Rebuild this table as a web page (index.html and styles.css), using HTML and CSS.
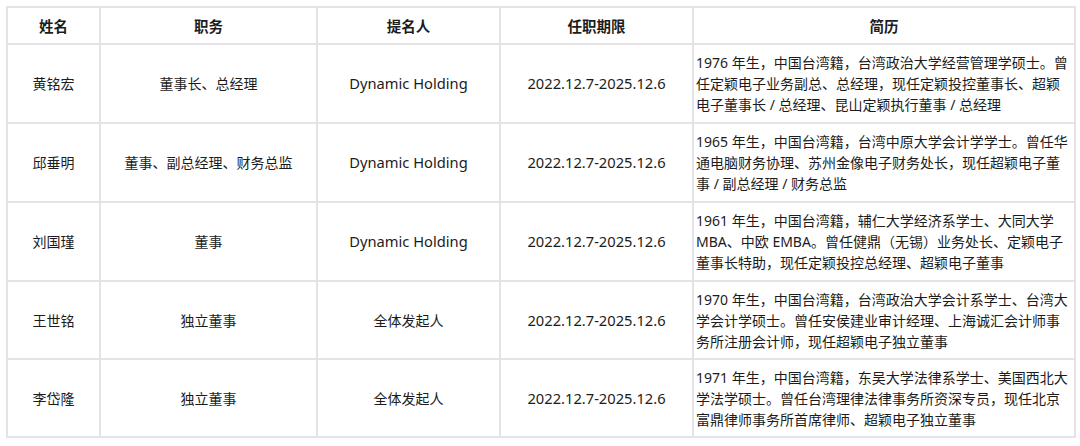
FILE: index.html
```html
<!DOCTYPE html>
<html lang="zh-CN">
<head>
<meta charset="utf-8">
<title>董事信息</title>
<link rel="stylesheet" href="styles.css">
</head>
<body>
<table class="board">
  <colgroup>
    <col class="c-name">
    <col class="c-role">
    <col class="c-nom">
    <col class="c-term">
    <col class="c-bio">
  </colgroup>
  <thead>
    <tr><th>姓名</th><th>职务</th><th>提名人</th><th>任职期限</th><th>简历</th></tr>
  </thead>
  <tbody>
    <tr>
      <td>黄铭宏</td><td>董事长、总经理</td><td class="latin">Dynamic Holding</td><td class="latin">2022.12.7-2025.12.6</td>
      <td class="bio">1976 年生，中国台湾籍，台湾政治大学经营管理学硕士。曾任定颖电子业务副总、总经理，现任定颖投控董事长、超颖电子董事长 / 总经理、昆山定颖执行董事 / 总经理</td>
    </tr>
    <tr>
      <td>邱垂明</td><td>董事、副总经理、财务总监</td><td class="latin">Dynamic Holding</td><td class="latin">2022.12.7-2025.12.6</td>
      <td class="bio">1965 年生，中国台湾籍，台湾中原大学会计学学士。曾任华通电脑财务协理、苏州金像电子财务处长，现任超颖电子董事 / 副总经理 / 财务总监</td>
    </tr>
    <tr>
      <td>刘国瑾</td><td>董事</td><td class="latin">Dynamic Holding</td><td class="latin">2022.12.7-2025.12.6</td>
      <td class="bio">1961 年生，中国台湾籍，辅仁大学经济系学士、大同大学 MBA、中欧 EMBA。曾任健鼎（无锡）业务处长、定颖电子董事长特助，现任定颖投控总经理、超颖电子董事</td>
    </tr>
    <tr class="short">
      <td>王世铭</td><td>独立董事</td><td>全体发起人</td><td class="latin">2022.12.7-2025.12.6</td>
      <td class="bio">1970 年生，中国台湾籍，台湾政治大学会计系学士、台湾大学会计学硕士。曾任安侯建业审计经理、上海诚汇会计师事务所注册会计师，现任超颖电子独立董事</td>
    </tr>
    <tr class="short">
      <td>李岱隆</td><td>独立董事</td><td>全体发起人</td><td class="latin">2022.12.7-2025.12.6</td>
      <td class="bio">1971 年生，中国台湾籍，东吴大学法律系学士、美国西北大学法学硕士。曾任台湾理律法律事务所资深专员，现任北京富鼎律师事务所首席律师、超颖电子独立董事</td>
    </tr>
  </tbody>
</table>
</body>
</html>
```

FILE: styles.css
```css
html, body {
  margin: 0;
  padding: 0;
  background: #ffffff;
}

body {
  padding: 6px 0 0 6px;
  font-family: "Noto Sans", "Noto Sans CJK SC", sans-serif;
  font-size: 14px;
  color: #1c1c1c;
}

.board {
  border-collapse: collapse;
  table-layout: fixed;
  width: 1068px;
}

.c-name { width: 93px; }
.c-role { width: 217px; }
.c-nom { width: 183px; }
.c-term { width: 193px; }
.c-bio { width: 382px; }

.board th,
.board td {
  border: 2px solid #e3e3e8;
  text-align: center;
  vertical-align: middle;
  padding: 0 2px;
}

.board th {
  height: 35px;
  font-weight: 700;
  font-size: 14.5px;
}

.board td {
  height: 77px;
  line-height: 21px;
}

.board td.latin {
  font-size: 14.7px;
}

.board tr.short td {
  height: 76px;
}

.board td.bio {
  text-align: left;
  padding: 0 2px 0 2px;
}
```
